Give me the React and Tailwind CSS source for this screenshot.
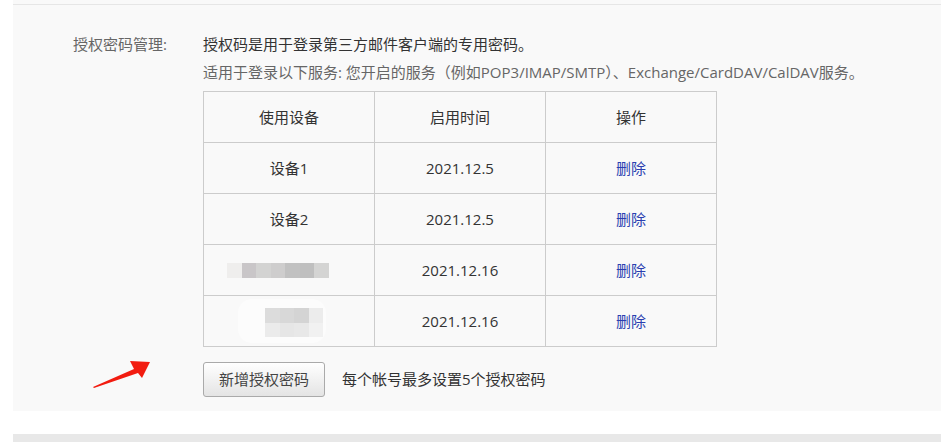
const ROWS = [
  { device: "设备1", date: "2021.12.5" },
  { device: "设备2", date: "2021.12.5" },
  { device: "blur1", date: "2021.12.16" },
  { device: "blur2", date: "2021.12.16" },
];

function Mosaic1() {
  const cells = ["#efeeed", "#c9c6c8", "#d3d3d2", "#cecdcd", "#c1c1c1", "#bfbfbf", "#d4d4d3"];
  return (
    <div className="flex">
      {cells.map((c, i) => (
        <div key={i} className="w-[14.5px] h-[15px]" style={{ background: c }} />
      ))}
    </div>
  );
}

function Mosaic2() {
  return (
    <div className="relative w-[88px] h-[44px] rounded-[14px] bg-[#fcfcfc]">
      <div className="absolute left-[27px] top-[9px] grid grid-cols-4">
        {["#dcdcdc", "#d8d8d8", "#d4d4d4", "#ececec", "#ebebeb", "#e6e6e6", "#e8e8e8", "#f1f1f1"].map((c, i) => (
          <div key={i} className="w-[14.5px] h-[14.5px]" style={{ background: c }} />
        ))}
      </div>
    </div>
  );
}

export default function App() {
  return (
    <div className="w-[941px] h-[442px] bg-white overflow-hidden text-[15px] text-[#333] font-['Open_Sans','Noto_Sans_CJK_SC',sans-serif]">
      <div className="ml-[13px] h-[411px] bg-[#f9f9f9] pt-[4px]">
        <div className="h-px bg-[#e6e6e6]" />
        <div className="flex pt-[28px]">
          <div className="w-[190px] pl-[60px] text-[#666] leading-[22px]">授权密码管理:</div>
          <div className="flex flex-col">
            <div className="leading-[22px]">授权码是用于登录第三方邮件客户端的专用密码。</div>
            <div className="mt-[6px] leading-[22px] text-[#666]">
              适用于登录以下服务: 您开启的服务（例如POP3/IMAP/SMTP）、Exchange/CardDAV/CalDAV服务。
            </div>
            <table className="mt-[8px] border-collapse w-[514px]">
              <thead>
                <tr>
                  {["使用设备", "启用时间", "操作"].map((h) => (
                    <th key={h} className="border border-[#cccccc] h-[51px] font-normal text-center">
                      {h}
                    </th>
                  ))}
                </tr>
              </thead>
              <tbody>
                {ROWS.map((r, i) => (
                  <tr key={i}>
                    <td className="border border-[#cccccc] h-[51px] w-[171px] text-center">
                      {r.device === "blur1" ? (
                        <div className="flex justify-center pr-[40px]">
                          <div className="ml-[18px]">
                            <Mosaic1 />
                          </div>
                        </div>
                      ) : r.device === "blur2" ? (
                        <div className="flex justify-center pr-[14px]">
                          <Mosaic2 />
                        </div>
                      ) : (
                        r.device
                      )}
                    </td>
                    <td className="border border-[#cccccc] w-[171px] text-center">{r.date}</td>
                    <td className="border border-[#cccccc] w-[171px] text-center text-[#2a3fb0]">删除</td>
                  </tr>
                ))}
              </tbody>
            </table>
            <div className="mt-[15px] flex items-center">
              <button className="w-[122px] h-[35px] rounded-[3px] border border-[#aaaaaa] bg-gradient-to-b from-white to-[#e4e4e4] text-[#444]">
                新增授权密码
              </button>
              <span className="ml-[17px]">每个帐号最多设置5个授权密码</span>
            </div>
          </div>
        </div>
        <svg className="ml-[77px] -mt-[40px]" width="62" height="32" viewBox="0 0 62 32">
          <path d="M3 30 L44 12 L40 4 L60 5 L52 21 L48 16 L4 31 Z" fill="#f21c10" />
        </svg>
      </div>
      <div className="ml-[13px] mt-[23px] h-[8px] bg-[#e8e8e8]" />
    </div>
  );
}
